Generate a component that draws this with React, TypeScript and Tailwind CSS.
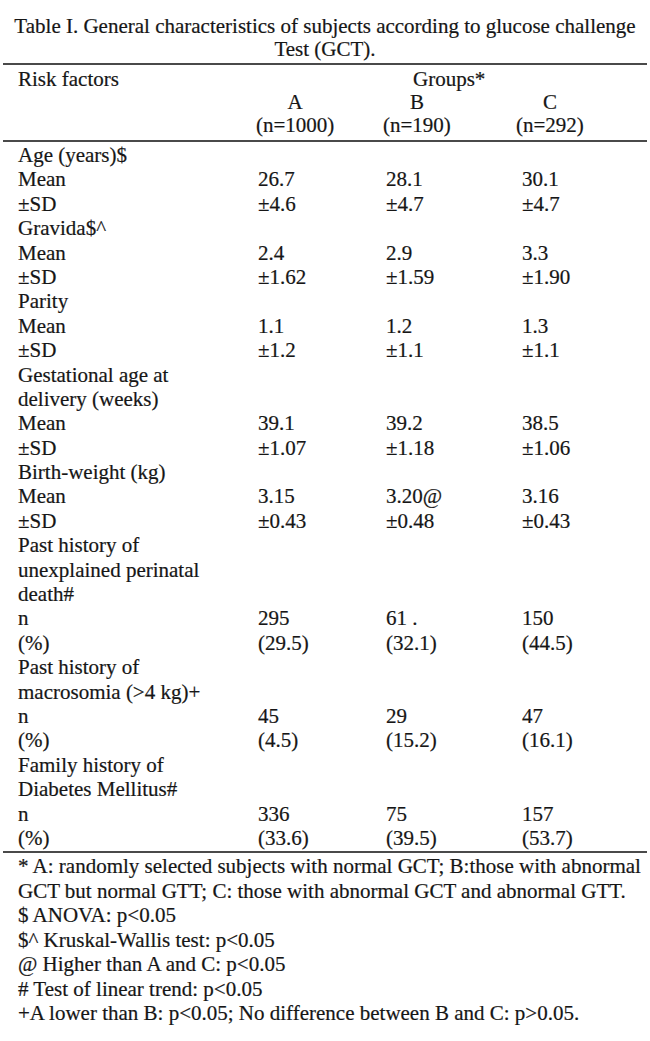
import React from 'react'

type Row = [string, string?, string?, string?]

const rows: Row[] = [
  ['Age (years)$'],
  ['Mean', '26.7', '28.1', '30.1'],
  ['±SD', '±4.6', '±4.7', '±4.7'],
  ['Gravida$^'],
  ['Mean', '2.4', '2.9', '3.3'],
  ['±SD', '±1.62', '±1.59', '±1.90'],
  ['Parity'],
  ['Mean', '1.1', '1.2', '1.3'],
  ['±SD', '±1.2', '±1.1', '±1.1'],
  ['Gestational age at'],
  ['delivery (weeks)'],
  ['Mean', '39.1', '39.2', '38.5'],
  ['±SD', '±1.07', '±1.18', '±1.06'],
  ['Birth-weight (kg)'],
  ['Mean', '3.15', '3.20@', '3.16'],
  ['±SD', '±0.43', '±0.48', '±0.43'],
  ['Past history of'],
  ['unexplained perinatal'],
  ['death#'],
  ['n', '295', '61 .', '150'],
  ['(%)', '(29.5)', '(32.1)', '(44.5)'],
  ['Past history of'],
  ['macrosomia (>4 kg)+'],
  ['n', '45', '29', '47'],
  ['(%)', '(4.5)', '(15.2)', '(16.1)'],
  ['Family history of'],
  ['Diabetes Mellitus#'],
  ['n', '336', '75', '157'],
  ['(%)', '(33.6)', '(39.5)', '(53.7)'],
]

const notes = [
  '* A: randomly selected subjects with normal GCT; B:those with abnormal',
  'GCT but normal GTT; C: those with abnormal GCT and abnormal GTT.',
  '$ ANOVA: p<0.05',
  '$^ Kruskal-Wallis test: p<0.05',
  '@ Higher than A and C: p<0.05',
  '# Test of linear trend: p<0.05',
  '+A lower than B: p<0.05; No difference between B and C: p>0.05.',
]

const Rule = () => <div className="mx-[3px] h-[2px] bg-[#4a4a4a]" />

const App = () => {
  return (
    <div
      className="w-[650px] h-[1041px] bg-white text-[#161616] text-[21px] overflow-hidden [-webkit-text-stroke:0.2px_#161616]"
      style={{ fontFamily: '"Liberation Serif", "Times New Roman", serif' }}
    >
      <div className="pt-[15px] pb-[2px] text-center leading-[23px]">
        <div className="whitespace-nowrap">Table I. General characteristics of subjects according to glucose challenge</div>
        <div>Test (GCT).</div>
      </div>
      <Rule />
      <div className="pt-[3px] pb-[3px] pl-[18px] grid grid-cols-[238px_127px_133px_1fr] leading-[23px]">
        <div>Risk factors</div>
        <div />
        <div className="pl-[30px]">Groups*</div>
        <div />
        <div />
        <div className="flex flex-col items-start">
          <div className="flex flex-col items-center">
            <span>A</span>
            <span>(n=1000)</span>
          </div>
        </div>
        <div className="flex flex-col items-start">
          <div className="flex flex-col items-center">
            <span>B</span>
            <span>(n=190)</span>
          </div>
        </div>
        <div className="flex flex-col items-start">
          <div className="flex flex-col items-center">
            <span>C</span>
            <span>(n=292)</span>
          </div>
        </div>
      </div>
      <Rule />
      <div className="pt-[1px] pb-[1px] pl-[18px] leading-[24.4px]">
        {rows.map((r, i) => (
          <div key={i} className="grid grid-cols-[240px_128px_136px_1fr] h-[24.4px]">
            <div className="whitespace-nowrap">{r[0]}</div>
            <div>{r[1] ?? ''}</div>
            <div>{r[2] ?? ''}</div>
            <div>{r[3] ?? ''}</div>
          </div>
        ))}
      </div>
      <Rule />
      <div className="pt-[1px] pl-[18px] leading-[24.5px]">
        {notes.map((n, i) => (
          <div key={i} className="whitespace-nowrap">
            {n}
          </div>
        ))}
      </div>
    </div>
  )
}

export default App
